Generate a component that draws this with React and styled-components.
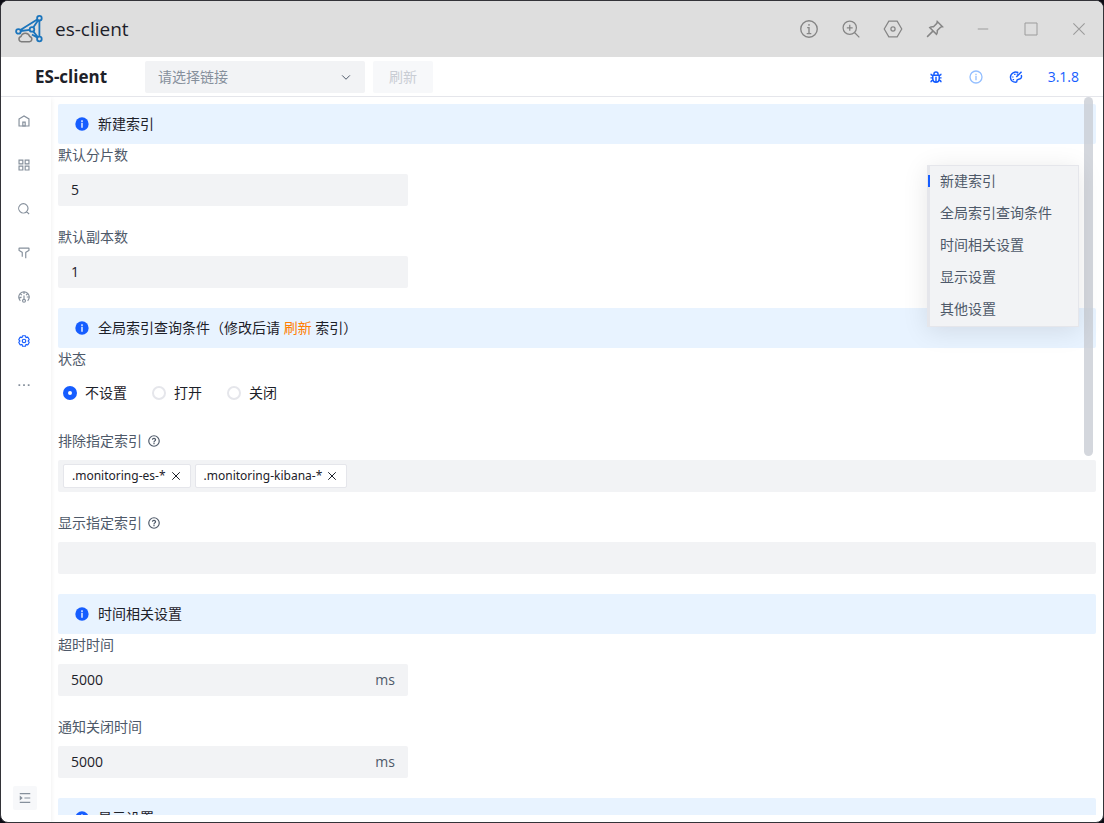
import React, { useState } from 'react'
import styled, { createGlobalStyle } from 'styled-components'

const GlobalStyle = createGlobalStyle`
  * {
    box-sizing: border-box;
  }
  body {
    margin: 0;
    background: #0c0c14;
    color: #1d2129;
    font-family: 'Open Sans', 'Noto Sans CJK SC', sans-serif;
    font-size: 14px;
    line-height: 22px;
  }
  button,
  input,
  select {
    font: inherit;
    color: inherit;
    margin: 0;
    border: none;
    outline: none;
  }
  svg {
    display: block;
    flex: none;
  }
`

const circle = 'M42 24c0 9.941-8.059 18-18 18S6 33.941 6 24 14.059 6 24 6s18 8.059 18 18Z'

const paths = {
  home: ['M7 17 24 7l17 10v24H7V17Z', 'M20 28h8v13h-8V28Z'],
  apps: ['M7 7h13v13H7zM28 7h13v13H28zM7 28h13v13H7zM28 28h13v13H28z'],
  search: [
    'M33.072 33.071c6.248-6.248 6.248-16.379 0-22.627-6.249-6.249-16.38-6.249-22.628 0-6.248 6.248-6.248 16.379 0 22.627 6.248 6.248 16.38 6.248 22.628 0Zm0 0 8.485 8.485',
  ],
  filter: [
    'M30 42V22.549a1 1 0 0 1 .463-.844l10.074-6.41A1 1 0 0 0 41 14.45V8a1 1 0 0 0-1-1H8a1 1 0 0 0-1 1v6.451a1 1 0 0 0 .463.844l10.074 6.41a1 1 0 0 1 .463.844V37',
  ],
  dashboard: [
    'M36.6 37A18 18 0 1 0 11.4 37',
    'M24 6v7.5M37.2 12 31 17.5M10.5 12.4 17 17.5M41.8 24h-8.3M6.5 28l9-3.5',
    'M24 32V19',
    'M29 37a5 5 0 1 1-10 0 5 5 0 0 1 10 0Z',
  ],
  settings: [
    'M18.797 6.732A1 1 0 0 1 19.76 6h8.48a1 1 0 0 1 .964.732l1.285 4.628a1 1 0 0 0 1.213.7l4.651-1.2a1 1 0 0 1 1.116.468l4.24 7.344a1 1 0 0 1-.153 1.2L38.193 23.3a1 1 0 0 0 0 1.402l3.364 3.427a1 1 0 0 1 .153 1.2l-4.24 7.344a1 1 0 0 1-1.116.468l-4.65-1.2a1 1 0 0 0-1.214.7l-1.285 4.628a1 1 0 0 1-.964.732h-8.48a1 1 0 0 1-.963-.732L17.51 36.64a1 1 0 0 0-1.213-.7l-4.65 1.2a1 1 0 0 1-1.116-.468l-4.24-7.344a1 1 0 0 1 .153-1.2L9.809 24.7a1 1 0 0 0 0-1.402l-3.364-3.427a1 1 0 0 1-.153-1.2l4.24-7.344a1 1 0 0 1 1.116-.468l4.65 1.2a1 1 0 0 0 1.213-.7l1.286-4.628Z',
    'M30 24a6 6 0 1 1-12 0 6 6 0 0 1 12 0Z',
  ],
  more: ['M5 24h6M21 24h6M37 24h6'],
  unfold: ['M6 9h36M22 24h20M6 39h36', 'M8 20v8l5-4z'],
  bug: [
    'M24 42c-6.075 0-11-4.925-11-11V18h22v13c0 6.075-4.925 11-11 11Zm0 0V23m11 4h8M5 27h8M7 13v1a4 4 0 0 0 4 4h26a4 4 0 0 0 4-4v-1m0 29v-.5a6.5 6.5 0 0 0-6.5-6.5M7 42v-.5a6.5 6.5 0 0 1 6.5-6.5M17 14a7 7 0 1 1 14 0v4H17Z',
  ],
  info: ['M24 20v14m0-20v4', circle],
  infoLine: ['M20 21h4v13M19 34h10M24 13v4', circle],
  question: [
    circle,
    'M24 31v4m0-6v-1c0-3 3-4 4.78-6.402C30.558 19.195 28.288 15 23.987 15c-4.014 0-5.382 2.548-5.388 4.514v.465',
  ],
  palette: [
    'M32 9C20 3 5 11 5 25c0 11 9 17 18 17 6 0 3-5 5-8 3-4 14 0 15-10 0-3 0-5-1-7',
    'M43 6 25 24',
    'M13 22v4M20 13v4M29 12v4M15 31v4',
  ],
  zoomIn: ['M37 21a16 16 0 1 1-32 0 16 16 0 0 1 32 0ZM33 33l11 11', 'M21 14v14M14 21h14'],
  hexagon: ['M14 5h20l11 19-11 19H14L3 24Z', 'M29 24a5 5 0 1 1-10 0 5 5 0 0 1 10 0Z'],
  pin: ['M30 4 44 18l-5 1-9 9q1 6-2 10L10 20q4-3 10-2l9-9ZM19 29 3 45'],
  minus: ['M10 24h28'],
  square: ['M6 6h36v36H6z'],
  close: ['M9 9 39 39M39 9 9 39'],
  down: ['M39.6 17.443 24.043 33 8.487 17.443'],
}

const Icon = ({ name, size = 14, stroke = 4 }) => (
  <svg
    width={size}
    height={size}
    viewBox='0 0 48 48'
    fill='none'
    stroke='currentColor'
    strokeWidth={stroke}
    aria-hidden='true'
  >
    {paths[name].map((d) => (
      <path key={d} d={d} />
    ))}
  </svg>
)

const Logo = () => (
  <svg width='28' height='28' viewBox='0 0 28 28' fill='none' aria-hidden='true'>
    <g stroke='#1c75bc' strokeWidth='1.8'>
      <path d='M5.4 15 22.2 4.4M5.8 16 14.8 14.8M18.2 12.4 23.2 5.2M24.4 5.4v16.2M18.2 16.4l4.6 5.6M17 19.4l5.2 3.2' />
      <circle cx='24.4' cy='3.2' r='2.3' />
      <circle cx='3.4' cy='16.4' r='2.3' />
      <circle cx='17' cy='14.4' r='2.3' />
      <circle cx='24.4' cy='24' r='2.3' />
    </g>
    <path
      d='M6.4 26.8a2.7 2.7 0 0 1-.4-5.3 4.6 4.6 0 0 1 8.8 0 2.7 2.7 0 0 1-.4 5.3Z'
      stroke='#7d7d7d'
      strokeWidth='1.5'
    />
  </svg>
)

const AlertIcon = () => (
  <svg width='16' height='16' viewBox='0 0 48 48' aria-hidden='true'>
    <circle cx='24' cy='24' r='20' fill='#165dff' />
    <path d='M24 13v5M24 20v15' stroke='#fff' strokeWidth='4' />
  </svg>
)

const navItems = [
  ['home', '首页'],
  ['apps', '数据浏览'],
  ['search', '基础查询'],
  ['filter', '高级查询'],
  ['dashboard', '监控'],
  ['settings', '设置'],
  ['more', '更多'],
]

const anchors = ['新建索引', '全局索引查询条件', '时间相关设置', '显示设置', '其他设置']

const Section = ({ id, title, children }) => (
  <section id={id}>
    <Alert>
      <AlertIcon />
      <h2>{title}</h2>
    </Alert>
    {children}
  </section>
)

const TextField = ({ id, label, value, suffix }) => (
  <Field>
    <label htmlFor={id}>{label}</label>
    <InputBox>
      <input id={id} type='text' defaultValue={value} />
      {suffix && <span>{suffix}</span>}
    </InputBox>
  </Field>
)

const TagField = ({ id, label, initial }) => {
  const [tags, setTags] = useState(initial)
  return (
    <Field>
      <label htmlFor={id}>
        {label}
        <Icon name='question' />
      </label>
      <TagBox>
        {tags.map((tag) => (
          <Tag key={tag}>
            {tag}
            <button
              type='button'
              aria-label={`删除 ${tag}`}
              onClick={() => setTags(tags.filter((t) => t !== tag))}
            >
              <Icon name='close' size={12} />
            </button>
          </Tag>
        ))}
        <input id={id} type='text' />
      </TagBox>
    </Field>
  )
}

const App = () => {
  const [status, setStatus] = useState('不设置')
  const [active, setActive] = useState(anchors[0])

  return (
    <Window>
      <GlobalStyle />
      <TitleBar>
        <Logo />
        <h1>es-client</h1>
        <TitleActions>
          <button type='button' aria-label='信息'>
            <Icon name='infoLine' size={22} stroke={3} />
          </button>
          <button type='button' aria-label='放大'>
            <Icon name='zoomIn' size={20} stroke={3} />
          </button>
          <button type='button' aria-label='设置'>
            <Icon name='hexagon' size={20} stroke={3} />
          </button>
          <button type='button' aria-label='置顶'>
            <Icon name='pin' size={18} stroke={4} />
          </button>
        </TitleActions>
        <WindowControls>
          <button type='button' aria-label='最小化'>
            <Icon name='minus' size={18} stroke={3} />
          </button>
          <button type='button' aria-label='最大化'>
            <Icon name='square' size={16} stroke={3} />
          </button>
          <button type='button' aria-label='关闭'>
            <Icon name='close' size={18} stroke={3} />
          </button>
        </WindowControls>
      </TitleBar>

      <Header>
        <strong>ES-client</strong>
        <SelectBox>
          <select aria-label='链接' defaultValue=''>
            <option value=''>请选择链接</option>
          </select>
          <Icon name='down' size={12} />
        </SelectBox>
        <RefreshButton type='button' disabled>
          刷新
        </RefreshButton>
        <HeaderActions>
          <IconButton type='button' aria-label='反馈'>
            <Icon name='bug' stroke={5} />
          </IconButton>
          <IconButton type='button' aria-label='关于' $light>
            <Icon name='info' size={16} />
          </IconButton>
          <IconButton type='button' aria-label='主题'>
            <Icon name='palette' stroke={5} />
          </IconButton>
          <VersionButton type='button'>3.1.8</VersionButton>
        </HeaderActions>
      </Header>

      <Body>
        <Sidebar>
          <nav>
            {navItems.map(([icon, label]) => (
              <NavItem key={icon} href={`#${icon}`} aria-label={label} $active={icon === 'settings'}>
                <Icon name={icon} stroke={icon === 'more' ? 6 : 4} />
              </NavItem>
            ))}
          </nav>
          <CollapseButton type='button' aria-label='展开菜单'>
            <Icon name='unfold' />
          </CollapseButton>
        </Sidebar>

        <Content>
          <Scroller>
            <Section id='a0' title='新建索引'>
              <TextField id='shards' label='默认分片数' value='5' />
              <TextField id='replicas' label='默认副本数' value='1' />
            </Section>
            <Section
              id='a1'
              title={
                <>
                  全局索引查询条件（修改后请 <em>刷新</em> 索引）
                </>
              }
            >
              <RadioField>
                <legend>状态</legend>
                <div>
                  {['不设置', '打开', '关闭'].map((name) => (
                    <label key={name}>
                      <input
                        type='radio'
                        name='status'
                        checked={status === name}
                        onChange={() => setStatus(name)}
                      />
                      {name}
                    </label>
                  ))}
                </div>
              </RadioField>
              <TagField
                id='exclude'
                label='排除指定索引'
                initial={['.monitoring-es-*', '.monitoring-kibana-*']}
              />
              <TagField id='include' label='显示指定索引' initial={[]} />
            </Section>
            <Section id='a2' title='时间相关设置'>
              <TextField id='timeout' label='超时时间' value='5000' suffix='ms' />
              <TextField id='notify' label='通知关闭时间' value='5000' suffix='ms' />
            </Section>
            <Section id='a3' title='显示设置' />
          </Scroller>
          <ScrollThumb />
          <Anchor aria-label='设置导航'>
            {anchors.map((name, i) => (
              <AnchorLink
                key={name}
                href={`#a${i}`}
                $active={active === name}
                onClick={() => setActive(name)}
              >
                {name}
              </AnchorLink>
            ))}
          </Anchor>
        </Content>
      </Body>
    </Window>
  )
}

const Window = styled.div`
  display: flex;
  flex-direction: column;
  height: 100vh;
  border: 1px solid #333338;
  border-radius: 8px;
  background: #fff;
  overflow: hidden;
`

const TitleBar = styled.header`
  flex: none;
  display: flex;
  align-items: center;
  height: 56px;
  padding-left: 14px;
  background: #dedede;
  h1 {
    margin: 0 auto 0 12px;
    font-size: 19px;
    font-weight: 400;
    line-height: 28px;
  }
  button {
    display: flex;
    align-items: center;
    justify-content: center;
    height: 56px;
    padding: 0;
    background: none;
    color: #868686;
    cursor: pointer;
  }
`

const TitleActions = styled.div`
  display: flex;
  margin-right: 3px;
  button {
    width: 42px;
  }
`

const WindowControls = styled.div`
  display: flex;
  button {
    width: 48px;
    color: #9c9c9c;
  }
`

const Header = styled.header`
  flex: none;
  display: flex;
  align-items: center;
  gap: 8px;
  height: 40px;
  padding: 0 12px 0 34px;
  border-bottom: 1px solid #e5e6eb;
  strong {
    width: 102px;
    font-size: 17px;
    font-weight: 700;
    line-height: 24px;
    white-space: nowrap;
  }
`

const SelectBox = styled.div`
  display: grid;
  grid-template-columns: 1fr 24px;
  align-items: center;
  width: 220px;
  height: 32px;
  padding-right: 1px;
  border-radius: 2px;
  background: #f2f3f5;
  color: #4e5969;
  select {
    grid-area: 1 / 1 / 2 / 3;
    height: 32px;
    padding: 0 32px 0 13px;
    appearance: none;
    background: none;
    color: #86909c;
  }
  svg {
    grid-area: 1 / 2;
    pointer-events: none;
  }
`

const RefreshButton = styled.button`
  height: 32px;
  padding: 0 16px;
  border-radius: 2px;
  background: #f7f8fa;
  color: #c9cdd4;
`

const HeaderActions = styled.div`
  display: flex;
  margin-left: auto;
`

const TextButton = styled.button`
  height: 32px;
  background: none;
  color: #165dff;
  cursor: pointer;
`

const IconButton = styled(TextButton)`
  display: flex;
  align-items: center;
  justify-content: center;
  width: 40px;
  padding: 0;
  color: ${({ $light }) => ($light ? '#94bfff' : '#165dff')};
`

const VersionButton = styled(TextButton)`
  padding: 0 12px;
`

const Body = styled.div`
  flex: 1;
  display: flex;
  min-height: 0;
`

const Sidebar = styled.aside`
  flex: none;
  display: flex;
  flex-direction: column;
  justify-content: space-between;
  width: 50px;
  padding: 4px 8px 12px 4px;
  box-shadow: 0 2px 5px rgba(0, 0, 0, 0.08);
  nav {
    display: flex;
    flex-direction: column;
    gap: 4px;
  }
`

const NavItem = styled.a`
  display: flex;
  align-items: center;
  justify-content: center;
  height: 40px;
  color: ${({ $active }) => ($active ? '#165dff' : '#86909c')};
`

const CollapseButton = styled.button`
  display: flex;
  align-items: center;
  justify-content: center;
  width: 24px;
  height: 24px;
  margin-left: 8px;
  padding: 0;
  border-radius: 2px;
  background: #f7f8fa;
  color: #86909c;
`

const Content = styled.main`
  position: relative;
  flex: 1;
  display: flex;
  min-width: 0;
  padding: 7px;
`

const Scroller = styled.div`
  flex: 1;
  min-width: 0;
  overflow-y: auto;
  scrollbar-width: none;
`

const ScrollThumb = styled.div`
  position: absolute;
  top: 0;
  right: 10px;
  width: 9px;
  height: calc(50% - 4px);
  border-radius: 5px;
  background: #c9cdd4;
  opacity: 0.8;
`

const Alert = styled.div`
  display: flex;
  align-items: center;
  gap: 8px;
  height: 40px;
  padding: 0 16px;
  border-radius: 2px;
  background: #e8f3ff;
  h2 {
    margin: 0;
    font-size: 14px;
    font-weight: 400;
  }
  em {
    color: #ff7d00;
    font-style: normal;
  }
`

const Field = styled.div`
  display: flex;
  flex-direction: column;
  gap: 8px;
  margin-bottom: 20px;
  label {
    display: flex;
    align-items: center;
    gap: 5px;
    color: #4e5969;
  }
`

const InputBox = styled.div`
  display: flex;
  align-items: center;
  width: 350px;
  max-width: 100%;
  height: 32px;
  padding: 0 13px;
  border-radius: 2px;
  background: #f2f3f5;
  color: #4e5969;
  input {
    flex: 1;
    min-width: 0;
    padding: 0;
    background: none;
    color: #1d2129;
  }
`

const RadioField = styled.fieldset`
  margin: 0 0 20px;
  padding: 0;
  border: none;
  legend {
    padding: 0;
    color: #4e5969;
  }
  div {
    display: flex;
    gap: 20px;
    height: 32px;
    margin-top: 8px;
  }
  label {
    display: flex;
    align-items: center;
    gap: 8px;
    padding-left: 5px;
    height: 30px;
  }
  input {
    width: 14px;
    height: 14px;
    appearance: none;
    border: 2px solid #e5e6eb;
    border-radius: 50%;
  }
  input:checked {
    border: 5px solid #165dff;
  }
`

const TagBox = styled.div`
  display: flex;
  align-items: center;
  gap: 4px;
  height: 32px;
  padding: 0 5px;
  border-radius: 2px;
  background: #f2f3f5;
  input {
    flex: 1;
    min-width: 0;
    background: none;
  }
`

const Tag = styled.span`
  display: flex;
  align-items: center;
  gap: 4px;
  height: 24px;
  padding: 0 8px;
  border: 1px solid #e5e6eb;
  border-radius: 2px;
  background: #fff;
  font-family: 'Noto Sans', 'Noto Sans CJK SC', sans-serif;
  font-size: 12px;
  white-space: nowrap;
  button {
    padding: 0;
    background: none;
    cursor: pointer;
  }
`

const Anchor = styled.nav`
  position: absolute;
  top: 68px;
  right: 24px;
  width: 152px;
  border: 1px solid #e5e6eb;
  background: #f2f3f5;
  box-shadow: 0 4px 24px rgba(0, 0, 0, 0.1);
`

const AnchorLink = styled.a`
  display: flex;
  align-items: center;
  height: 32px;
  padding-bottom: 2px;
  border-left: 2px solid #e5e6eb;
  color: #4e5969;
  text-decoration: none;
  &::before {
    content: '';
    width: 2px;
    height: 12px;
    margin: 0 10px 0 -2px;
    background: ${({ $active }) => ($active ? '#165dff' : 'transparent')};
  }
`

export default App
